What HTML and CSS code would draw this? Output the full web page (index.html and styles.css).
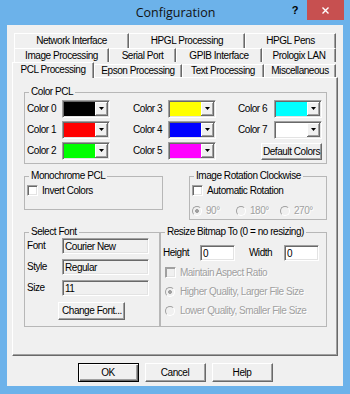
FILE: index.html
```html
<!DOCTYPE html>
<html lang="en">
<head>
    <meta charset="UTF-8">
    <title>Configuration</title>
    <link rel="stylesheet" href="styles.css">
</head>
<body>
    <div class="window">
        <div class="titlebar">
            <span></span>
            <span class="title">Configuration</span>
            <div class="caption-buttons">
                <span class="help">?</span>
                <span class="close">
                    <svg width="7" height="7" viewBox="0 0 7 7"><path d="M0.5 0.5L6.5 6.5M6.5 0.5L0.5 6.5" stroke="#fff" stroke-width="1.4"/></svg>
                </span>
            </div>
        </div>

        <div class="client">
            <div class="tabs">
                <div class="tab-row row1">
                    <div class="tab w115">Network Interface</div>
                    <div class="tab w116">HPGL Processing</div>
                    <div class="tab w91">HPGL Pens</div>
                </div>
                <div class="tab-row row2">
                    <div class="tab w95">Image Processing</div>
                    <div class="tab w67">Serial Port</div>
                    <div class="tab w86">GPIB Interface</div>
                    <div class="tab w74">Prologix LAN</div>
                </div>
                <div class="tab-row row3">
                    <div class="tab w82 active">PCL Processing</div>
                    <div class="tab w88">Epson Processing</div>
                    <div class="tab w82">Text Processing</div>
                    <div class="tab w72">Miscellaneous</div>
                </div>
            </div>

            <div class="panel">
                <fieldset class="group color-group">
                    <legend>Color PCL</legend>
                    <div class="color-grid">
                        <div class="color-cell"><span class="lbl">Color 0</span><div class="combo"><span class="swatch sw-black"></span><span class="drop"><svg width="5" height="3"><path d="M0 0h5l-2.5 3z"/></svg></span></div></div>
                        <div class="color-cell"><span class="lbl">Color 3</span><div class="combo"><span class="swatch sw-yellow"></span><span class="drop"><svg width="5" height="3"><path d="M0 0h5l-2.5 3z"/></svg></span></div></div>
                        <div class="color-cell"><span class="lbl wide">Color 6</span><div class="combo"><span class="swatch sw-cyan"></span><span class="drop"><svg width="5" height="3"><path d="M0 0h5l-2.5 3z"/></svg></span></div></div>

                        <div class="color-cell"><span class="lbl">Color 1</span><div class="combo"><span class="swatch sw-red"></span><span class="drop"><svg width="5" height="3"><path d="M0 0h5l-2.5 3z"/></svg></span></div></div>
                        <div class="color-cell"><span class="lbl">Color 4</span><div class="combo"><span class="swatch sw-blue"></span><span class="drop"><svg width="5" height="3"><path d="M0 0h5l-2.5 3z"/></svg></span></div></div>
                        <div class="color-cell"><span class="lbl wide">Color 7</span><div class="combo"><span class="swatch sw-white"></span><span class="drop"><svg width="5" height="3"><path d="M0 0h5l-2.5 3z"/></svg></span></div></div>

                        <div class="color-cell"><span class="lbl">Color 2</span><div class="combo"><span class="swatch sw-green"></span><span class="drop"><svg width="5" height="3"><path d="M0 0h5l-2.5 3z"/></svg></span></div></div>
                        <div class="color-cell"><span class="lbl">Color 5</span><div class="combo"><span class="swatch sw-magenta"></span><span class="drop"><svg width="5" height="3"><path d="M0 0h5l-2.5 3z"/></svg></span></div></div>
                        <div class="color-cell end"><button class="btn default-colors">Default Colors</button></div>
                    </div>
                </fieldset>

                <div class="group-row top">
                    <fieldset class="group mono-group">
                        <legend>Monochrome PCL</legend>
                        <div class="check-row"><span class="check"></span>Invert Colors</div>
                    </fieldset>
                    <fieldset class="group rotate-group">
                        <legend>Image Rotation Clockwise</legend>
                        <div class="check-row"><span class="check"></span>Automatic Rotation</div>
                        <div class="radio-line disabled">
                            <div class="radio-item"><span class="radio on"></span>90°</div>
                            <div class="radio-item"><span class="radio"></span>180°</div>
                            <div class="radio-item"><span class="radio"></span>270°</div>
                        </div>
                    </fieldset>
                </div>

                <div class="group-row">
                    <fieldset class="group font-group">
                        <legend>Select Font</legend>
                        <div class="font-row"><span class="lbl">Font</span><input class="field readonly" value="Courier New" readonly></div>
                        <div class="font-row"><span class="lbl">Style</span><input class="field readonly" value="Regular" readonly></div>
                        <div class="font-row"><span class="lbl">Size</span><input class="field readonly" value="11" readonly></div>
                        <button class="btn change-font">Change Font...</button>
                    </fieldset>
                    <fieldset class="group resize-group">
                        <legend>Resize Bitmap To (0 = no resizing)</legend>
                        <div class="size-row">
                            <span class="size-lbl">Height</span><input class="field small" value="0">
                            <span class="size-lbl gap">Width</span><input class="field small" value="0">
                        </div>
                        <div class="opt-row disabled"><span class="check off"></span>Maintain Aspect Ratio</div>
                        <div class="opt-row disabled"><span class="radio on"></span>Higher Quality, Larger File Size</div>
                        <div class="opt-row disabled"><span class="radio"></span>Lower Quality, Smaller File Size</div>
                    </fieldset>
                </div>
            </div>

            <div class="actions">
                <button class="btn default">OK</button>
                <button class="btn">Cancel</button>
                <button class="btn">Help</button>
            </div>
        </div>
    </div>
</body>
</html>
```

FILE: styles.css
```css
body {
    margin: 0;
    font-family: "Liberation Sans", Arial, sans-serif;
    font-size: 10px;
    letter-spacing: -0.45px;
    line-height: 12px;
    color: #000;
}

.window {
    width: 350px;
    height: 394px;
    box-sizing: border-box;
    padding: 0 7px 8px;
    background-color: #6cb2ea;
    display: flex;
    flex-direction: column;
}

/* title bar */
.titlebar {
    height: 25px;
    display: grid;
    grid-template-columns: 1fr auto 1fr;
    margin-right: -1px;
}

.title {
    font-family: "Open Sans", sans-serif;
    font-size: 12.5px;
    letter-spacing: 0;
    line-height: 25px;
    color: #111;
}

.caption-buttons {
    display: flex;
    justify-content: flex-end;
    align-items: flex-start;
}

.help {
    width: 16px;
    margin-right: 4px;
    text-align: center;
    font-weight: bold;
    font-size: 11px;
    line-height: 20px;
    letter-spacing: 0;
}

.close {
    width: 37px;
    height: 20px;
    background-color: #c75050;
    display: flex;
    align-items: center;
    justify-content: center;
}

/* dialog body */
.client {
    flex: 1;
    background-color: #f0f0f0;
    padding: 8px 5px 0;
    display: flex;
    flex-direction: column;
}

.tab-row {
    display: flex;
}

.row1 { height: 15px; padding-left: 2px; }
.row2 { height: 14px; padding-left: 2px; }
.row3 { height: 15px; align-items: flex-start; }

.tab {
    box-sizing: border-box;
    height: 100%;
    border-top: 1px solid #fff;
    border-left: 1px solid #fff;
    border-right: 1px solid #696969;
    box-shadow: inset -1px 0 #a0a0a0;
    text-align: center;
    line-height: 13px;
    white-space: nowrap;
}

.row3 .tab {
    height: 13px;
    margin-top: 2px;
    line-height: 12px;
}

.row3 .tab.active {
    position: relative;
    z-index: 1;
    height: 16px;
    margin-top: 0;
    line-height: 14px;
    background-color: #f0f0f0;
}

.w67 { width: 67px; }
.w72 { width: 72px; }
.w74 { width: 74px; }
.w82 { width: 82px; }
.w86 { width: 86px; }
.w88 { width: 88px; }
.w91 { width: 91px; }
.w95 { width: 95px; }
.w115 { width: 115px; }
.w116 { width: 116px; }

.panel {
    height: 279px;
    box-sizing: border-box;
    border: 1px solid;
    border-color: #fff #696969 #696969 #fff;
    box-shadow: inset -1px -1px #a0a0a0;
    padding: 8px 10px 0 11px;
    display: flex;
    flex-direction: column;
    gap: 6px;
}

/* group boxes */
.group {
    margin: 0;
    min-width: 0;
    border: 1px solid #b7b7b7;
    padding: 0 2px;
}

.group legend {
    margin-left: 2px;
    padding: 0 2px;
    line-height: 12px;
}

.color-group {
    padding: 2px 4px 3px 2px;
}

.color-grid {
    display: grid;
    grid-template-columns: 106px 105px 84px;
    grid-auto-rows: 18px;
    row-gap: 3px;
}

.color-cell {
    display: flex;
    align-items: center;
}

.color-cell.end {
    justify-content: flex-end;
    align-items: flex-start;
    padding-top: 1px;
}

.lbl {
    width: 35px;
    flex-shrink: 0;
}

.lbl.wide { width: 36px; }

.combo {
    width: 48px;
    height: 18px;
    box-sizing: border-box;
    border: 1px solid;
    border-color: #a0a0a0 #fff #fff #a0a0a0;
    box-shadow: inset 1px 1px #696969, inset -1px -1px #e3e3e3;
    padding: 1px;
    background-color: #fff;
    display: flex;
}

.swatch { flex: 1; }
.sw-black { background-color: #000; }
.sw-red { background-color: #ff0000; }
.sw-green { background-color: #00ff00; }
.sw-yellow { background-color: #ffff00; }
.sw-blue { background-color: #0000ff; }
.sw-magenta { background-color: #ff00ff; }
.sw-cyan { background-color: #00ffff; }
.sw-white { background-color: #fff; }

.drop {
    width: 13px;
    box-sizing: border-box;
    background-color: #f0f0f0;
    border-right: 1px solid #696969;
    border-bottom: 1px solid #696969;
    box-shadow: inset 1px 1px #fff, inset -1px -1px #a0a0a0;
    display: flex;
    align-items: center;
    justify-content: center;
}

.drop svg { display: block; }

/* buttons */
.btn {
    font: inherit;
    letter-spacing: inherit;
    color: #000;
    margin: 0;
    padding: 0;
    box-sizing: border-box;
    background-color: #f0f0f0;
    border: 1px solid;
    border-color: #fff #696969 #696969 #fff;
    box-shadow: inset -1px -1px #a0a0a0;
}

.btn.default {
    border-color: #000;
    box-shadow: inset 1px 1px #fff, inset -1px -1px #696969, inset -2px -2px #a0a0a0;
}

.default-colors {
    width: 61px;
    height: 17px;
}

/* checkboxes and radios */
.check-row,
.opt-row {
    display: flex;
    align-items: center;
}

.check-row {
    height: 11px;
    gap: 4px;
}

.check {
    width: 11px;
    height: 11px;
    box-sizing: border-box;
    background-color: #fff;
    border: 1px solid;
    border-color: #a0a0a0 #fff #fff #a0a0a0;
    box-shadow: inset 1px 1px #696969, inset -1px -1px #e3e3e3;
}

.check.off {
    background-color: #f0f0f0;
    box-shadow: inset 1px 1px #a0a0a0, inset -1px -1px #e3e3e3;
}

.radio {
    width: 10px;
    height: 10px;
    box-sizing: border-box;
    border-radius: 50%;
    border: 1px solid;
    border-color: #a0a0a0 #fff #fff #a0a0a0;
    background-color: #f0f0f0;
    flex-shrink: 0;
}

.radio.on {
    background: radial-gradient(circle, #a0a0a0 0 1.6px, #f0f0f0 2.2px);
}

.disabled {
    color: #a0a0a0;
    text-shadow: 1px 1px 0 #fff;
}

.group-row {
    display: flex;
    justify-content: space-between;
}

.group-row.top { align-items: flex-start; }

.mono-group {
    width: 133px;
    padding: 3px 2px 13px;
}

.rotate-group {
    width: 132px;
    padding: 3px 2px 3px;
}

.radio-line {
    display: flex;
    height: 10px;
    margin-top: 10px;
    align-items: center;
}

.radio-item {
    width: 45px;
    display: flex;
    align-items: center;
    gap: 4px;
}

/* font and size */
.font-group {
    width: 133px;
    padding: 0 2px 6px;
    display: flex;
    flex-direction: column;
    gap: 5px;
}

.font-row {
    display: flex;
    align-items: center;
    height: 16px;
}

.field {
    font: inherit;
    letter-spacing: inherit;
    color: #000;
    margin: 0;
    width: 87px;
    height: 16px;
    box-sizing: border-box;
    padding: 0 0 0 2px;
    border: 1px solid;
    border-color: #a0a0a0 #fff #fff #a0a0a0;
    box-shadow: inset 1px 1px #696969, inset -1px -1px #e3e3e3;
    background-color: #fff;
    outline: none;
}

.field.readonly { background-color: #f0f0f0; }
.field.small { width: 35px; }

.change-font {
    align-self: center;
    width: 67px;
    height: 18px;
    margin-top: 1px;
}

.resize-group {
    width: 165px;
    padding: 7px 2px 6px;
}

.size-row {
    display: flex;
    align-items: center;
    height: 16px;
    margin-bottom: 2px;
}

.size-lbl {
    width: 37px;
}

.size-lbl.gap {
    width: 35px;
    margin-left: 14px;
}

.opt-row {
    height: 19px;
    padding-left: 2px;
    gap: 5px;
}

.opt-row .check { margin-right: -1px; }

/* dialog buttons */
.actions {
    display: flex;
    justify-content: center;
    gap: 6px;
    margin-top: 7px;
}

.actions .btn {
    width: 61px;
    height: 19px;
}
```
